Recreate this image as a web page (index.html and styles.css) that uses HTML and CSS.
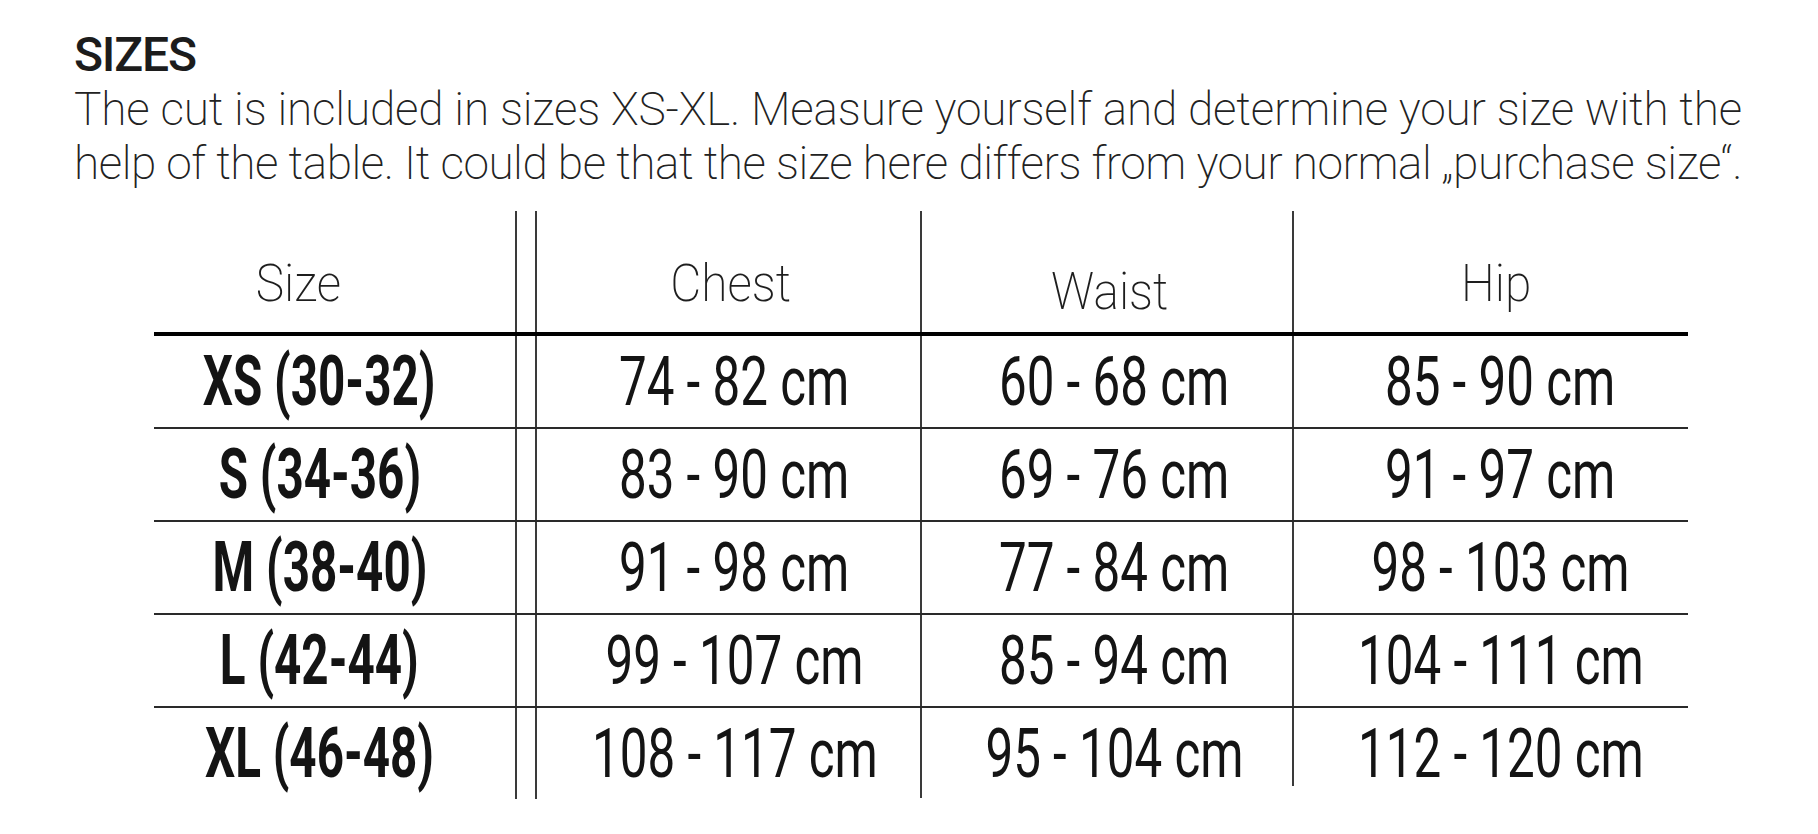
FILE: index.html
```html
<!DOCTYPE html>
<html lang="en">
<head>
<meta charset="utf-8">
<title>Sizes</title>
<link rel="stylesheet" href="styles.css">
</head>
<body>
<div class="page">
  <h1 class="title">SIZES</h1>
  <p class="intro"><span class="line1">The cut is included in sizes XS-XL. Measure yourself and determine your size with the</span><br><span class="line2">help of the table. It could be that the size here differs from your normal „purchase size“.</span></p>

  <div class="size-table">
    <div class="hcell c1"><span class="htext size-h">Size</span></div>
    <div class="hcell gap"></div>
    <div class="hcell c2"><span class="htext">Chest</span></div>
    <div class="hcell c3 low"><span class="htext">Waist</span></div>
    <div class="hcell c4"><span class="htext">Hip</span></div>
    <div class="rule thick"></div>

    <div class="cell c1"><span class="bold">XS (30-32)</span></div>
    <div class="cell gap"></div>
    <div class="cell c2"><span class="val">74 - 82 cm</span></div>
    <div class="cell c3"><span class="val">60 - 68 cm</span></div>
    <div class="cell c4"><span class="val">85 - 90 cm</span></div>
    <div class="rule"></div>

    <div class="cell c1"><span class="bold">S (34-36)</span></div>
    <div class="cell gap"></div>
    <div class="cell c2"><span class="val">83 - 90 cm</span></div>
    <div class="cell c3"><span class="val">69 - 76 cm</span></div>
    <div class="cell c4"><span class="val">91 - 97 cm</span></div>
    <div class="rule"></div>

    <div class="cell c1"><span class="bold">M (38-40)</span></div>
    <div class="cell gap"></div>
    <div class="cell c2"><span class="val">91 - 98 cm</span></div>
    <div class="cell c3"><span class="val">77 - 84 cm</span></div>
    <div class="cell c4"><span class="val">98 - 103 cm</span></div>
    <div class="rule"></div>

    <div class="cell c1"><span class="bold">L (42-44)</span></div>
    <div class="cell gap"></div>
    <div class="cell c2"><span class="val">99 - 107 cm</span></div>
    <div class="cell c3"><span class="val">85 - 94 cm</span></div>
    <div class="cell c4"><span class="val">104 - 111 cm</span></div>
    <div class="rule"></div>

    <div class="cell c1 last"><span class="bold">XL (46-48)</span></div>
    <div class="cell gap last"></div>
    <div class="cell c2 last"><span class="val">108 - 117 cm</span></div>
    <div class="cell c3 last"><span class="val">95 - 104 cm</span></div>
    <div class="cell c4 last"><span class="val">112 - 120 cm</span></div>
  </div>
</div>
</body>
</html>
```

FILE: styles.css
```css
html, body {
  margin: 0;
  padding: 0;
  background: #ffffff;
}

body {
  font-family: Roboto, "Liberation Sans", sans-serif;
  color: #1e1e1e;
}

.page {
  padding: 28px 0 0 74px;
}

.title {
  margin: 0;
  font-size: 48px;
  line-height: 54px;
  font-weight: 500;
  letter-spacing: -1.2px;
  color: #1c1c1c;
}

.intro {
  margin: 0;
  font-size: 46px;
  line-height: 54px;
  font-weight: 200;
  white-space: nowrap;
  color: #222222;
}

.line1 {
  letter-spacing: -0.2px;
}

.line2 {
  letter-spacing: -0.5px;
}

.size-table {
  display: grid;
  grid-template-columns: 361px 20px 385px 372px 396px;
  grid-template-rows: 121px 4px 91px 2px 91px 2px 91px 2px 91px 2px 91px;
  width: 1534px;
  margin: 21px 0 0 80px;
}

.hcell {
  display: flex;
  align-items: flex-end;
  justify-content: center;
  padding-bottom: 22px;
  box-sizing: border-box;
}

.hcell.low {
  padding-bottom: 14px;
}

.htext {
  display: inline-block;
  font-size: 52px;
  line-height: 52px;
  font-weight: 200;
  color: #1e1e1e;
  transform: scaleX(0.92);
}

.hcell.c1 {
  padding-right: 72px;
}

.hcell.c2 {
  padding-left: 4px;
}

.hcell.c3 {
  padding-left: 6px;
}

.hcell.c4 {
  padding-left: 10px;
}

.gap,
.c2,
.c3,
.c4 {
  border-left: 2px solid #3a3a3a;
}

.rule {
  grid-column: 1 / -1;
  background: #2a2a2a;
}

.rule.thick {
  background: #000000;
}

.cell {
  display: flex;
  justify-content: center;
  align-items: flex-start;
  line-height: 91px;
  color: #141414;
}

.cell.c1 {
  padding-right: 30px;
}

.cell.c2 {
  padding-left: 12px;
}

.cell.c3 {
  padding-left: 15px;
}

.cell.c4 {
  padding-left: 19px;
}

.bold {
  display: inline-block;
  font-size: 70px;
  font-weight: 700;
  white-space: nowrap;
  transform: scaleX(0.68);
}

.val {
  display: inline-block;
  font-size: 69px;
  font-weight: 400;
  white-space: nowrap;
  transform: scaleX(0.715);
}

.cell.last {
  align-self: start;
  height: 91px;
}

.gap.last,
.c2.last {
  height: 97px;
}

.c3.last {
  height: 90px;
}

.c4.last {
  height: 78px;
}
```
